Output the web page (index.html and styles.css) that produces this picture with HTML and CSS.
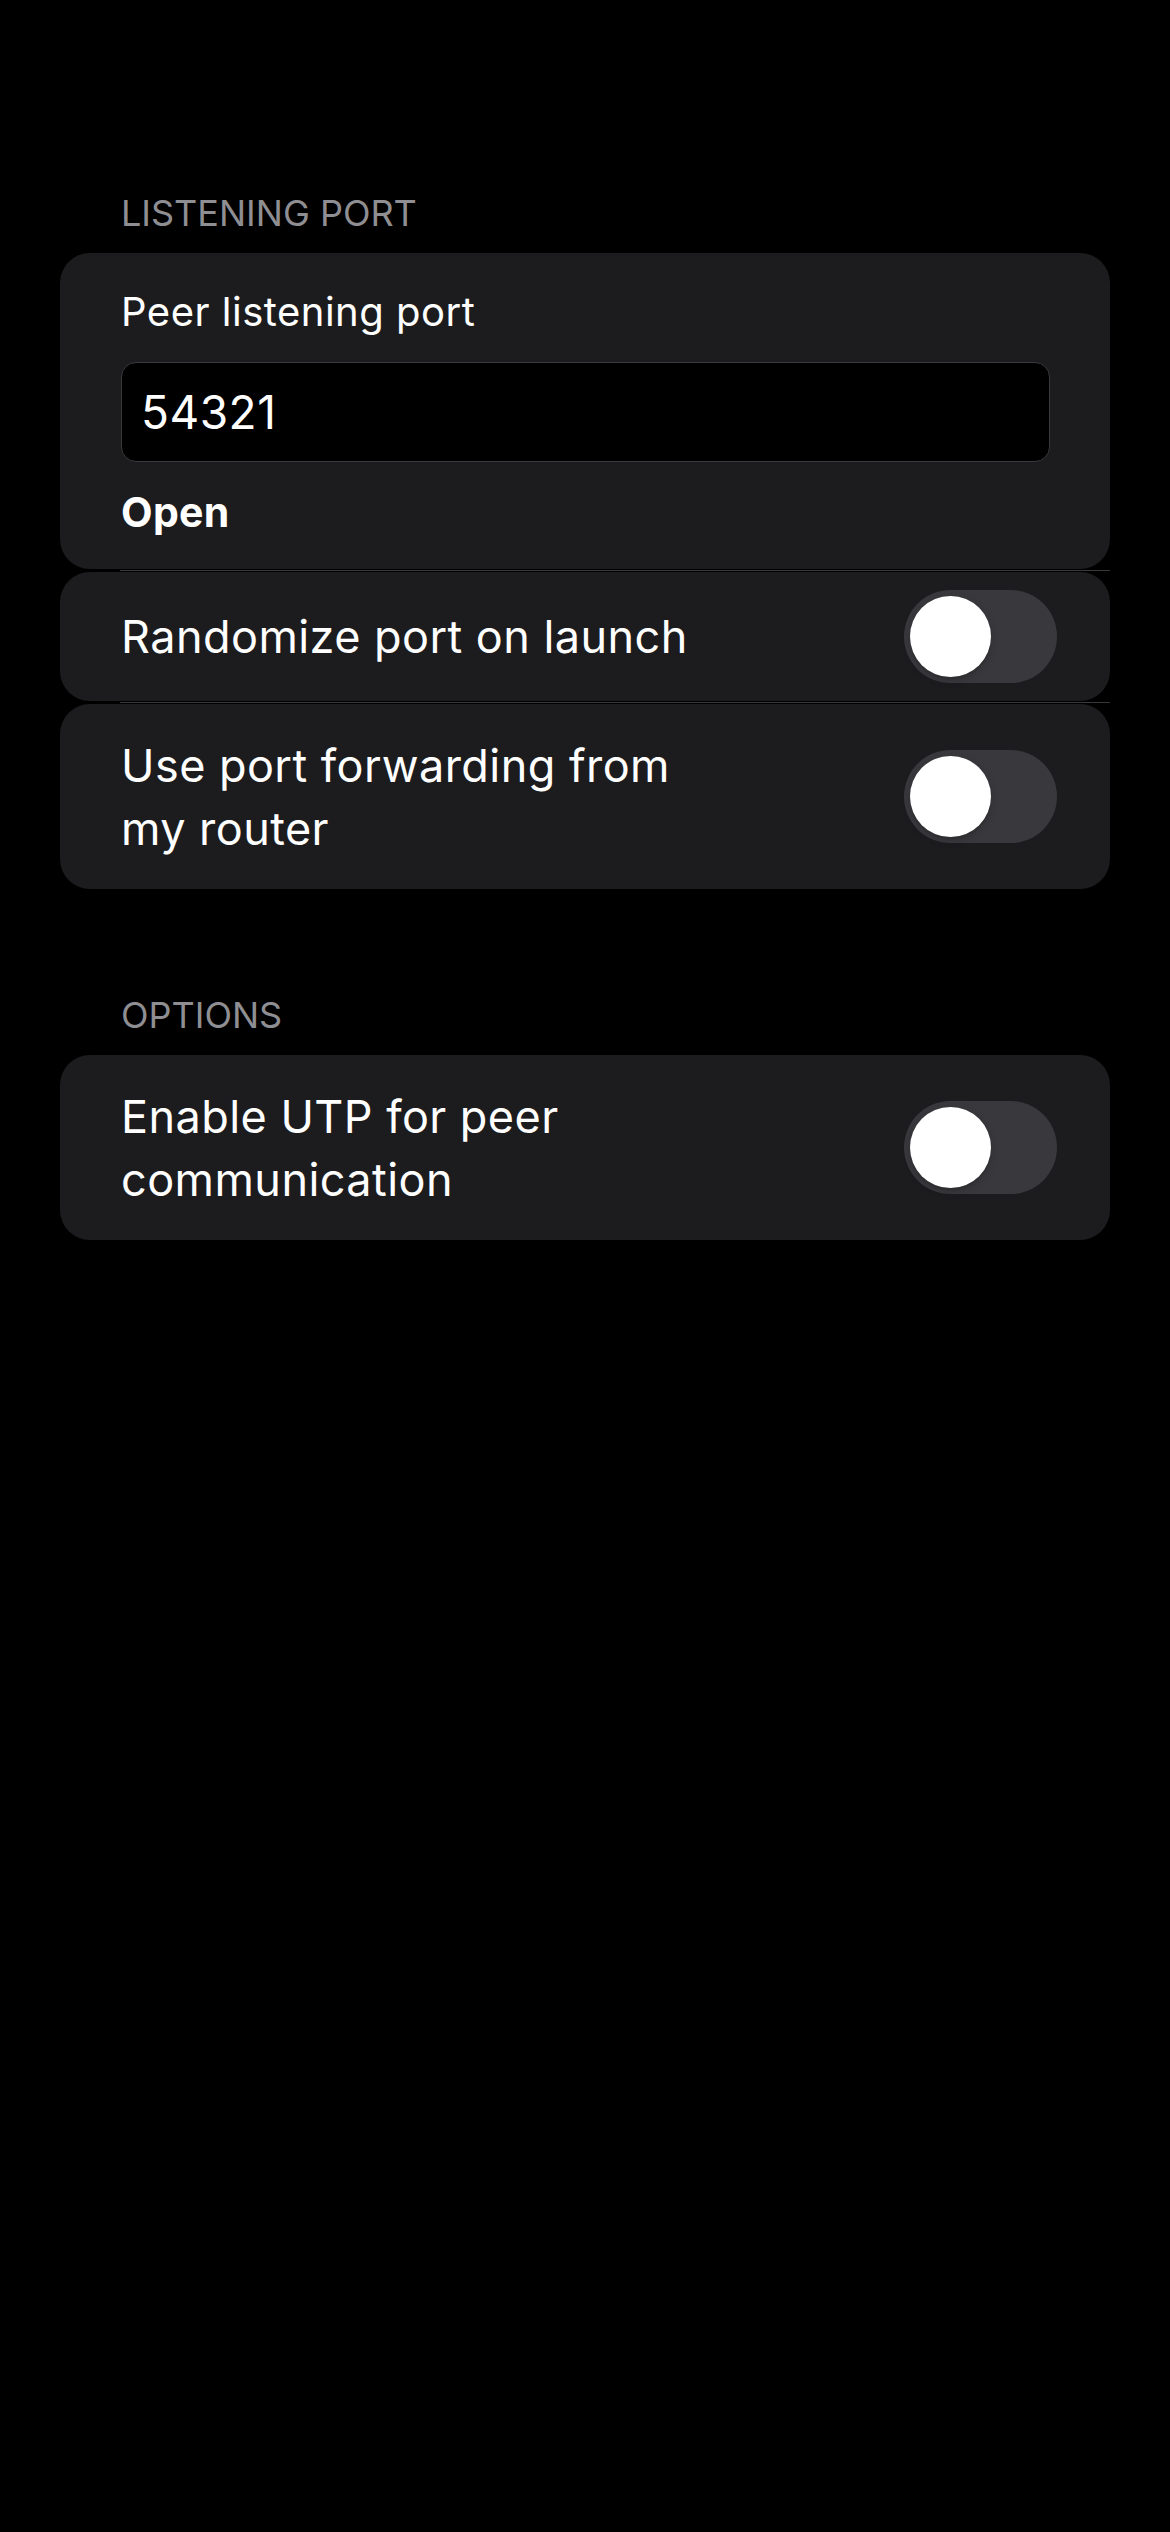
FILE: index.html
```html
<!DOCTYPE html>
<html lang="en">
<head>
<meta charset="utf-8">
<title>Listening Port Settings</title>
<link rel="stylesheet" href="styles.css">
</head>
<body>
<main class="page">
  <section class="group">
    <h2 class="group-title">LISTENING PORT</h2>
    <div class="card card-port">
      <div class="field-label">Peer listening port</div>
      <div class="text-input">54321</div>
      <div class="status">Open</div>
    </div>
    <div class="sep"></div>
    <div class="card row row-single">
      <div class="row-text">Randomize port on launch</div>
      <div class="switch"><span class="knob"></span></div>
    </div>
    <div class="sep"></div>
    <div class="card row row-double">
      <div class="row-text">Use port forwarding from my router</div>
      <div class="switch"><span class="knob"></span></div>
    </div>
  </section>

  <section class="group group-options">
    <h2 class="group-title">OPTIONS</h2>
    <div class="card row row-double">
      <div class="row-text">Enable UTP for peer communication</div>
      <div class="switch"><span class="knob"></span></div>
    </div>
  </section>
</main>
</body>
</html>
```

FILE: styles.css
```css
html, body {
  margin: 0;
  padding: 0;
  background: #000;
}

body {
  width: 1170px;
  min-height: 2532px;
  font-family: Inter, "Noto Sans", "Liberation Sans", sans-serif;
  color: #fff;
}

.page {
  padding: 191px 60px 0 60px;
  display: flex;
  flex-direction: column;
}

.group {
  display: flex;
  flex-direction: column;
}

.group-options {
  margin-top: 104px;
}

.group-title {
  margin: 0 0 18px 61px;
  font-size: 36px;
  line-height: 44px;
  font-weight: 400;
  color: #8e8e93;
  letter-spacing: 0;
}

.card {
  background: #1c1c1e;
  border-radius: 30px;
}

.card-port {
  padding: 35px 60px 33px 61px;
  display: flex;
  flex-direction: column;
}

.field-label {
  font-size: 40px;
  line-height: 48px;
  letter-spacing: 0.5px;
}

.text-input {
  margin-top: 26px;
  height: 98px;
  border: 1px solid #3a3a3c;
  border-radius: 15px;
  background: #000;
  padding-left: 19px;
  font-size: 46px;
  line-height: 98px;
  letter-spacing: 0.5px;
}

.status {
  margin-top: 26px;
  font-size: 41px;
  line-height: 48px;
  font-weight: 700;
  letter-spacing: 0.3px;
}

.sep {
  height: 1px;
  background: #38383a;
  margin: 1px 0 1px 60px;
}

.row {
  display: flex;
  align-items: center;
  justify-content: space-between;
  padding: 0 53px 0 61px;
}

.row-single {
  height: 129px;
}

.row-double {
  height: 185px;
}

.row-text {
  font-size: 45px;
  line-height: 63px;
  letter-spacing: 0.45px;
  max-width: 610px;
}

.switch {
  flex: none;
  width: 153px;
  height: 93px;
  border-radius: 47px;
  background: #39393d;
  display: flex;
  align-items: center;
  padding-left: 6px;
  box-sizing: border-box;
}

.knob {
  width: 81px;
  height: 81px;
  border-radius: 50%;
  background: #fff;
  box-shadow: 0 3px 8px rgba(0, 0, 0, 0.18), 0 3px 1px rgba(0, 0, 0, 0.06);
}
```
